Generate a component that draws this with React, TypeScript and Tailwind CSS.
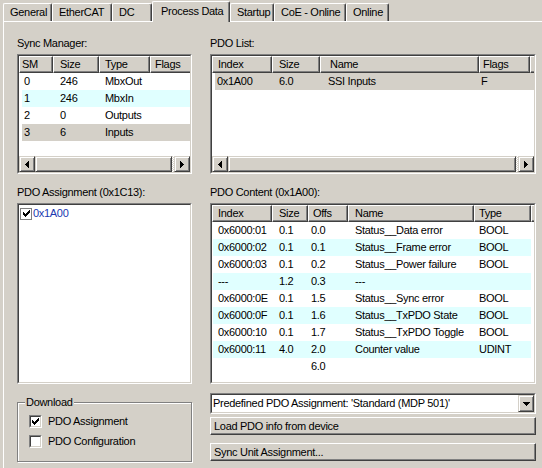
import React from 'react';

type Col = { label: string; h: string; d: string };

function CheckGlyph() {
  return (
    <svg width="7" height="7" viewBox="0 0 7 7" shapeRendering="crispEdges">
      <rect x="6" y="0" width="1" height="1" fill="#000" />
      <rect x="5" y="1" width="2" height="1" fill="#000" />
      <rect x="0" y="2" width="1" height="1" fill="#000" />
      <rect x="4" y="2" width="3" height="1" fill="#000" />
      <rect x="0" y="3" width="2" height="1" fill="#000" />
      <rect x="3" y="3" width="3" height="1" fill="#000" />
      <rect x="0" y="4" width="5" height="1" fill="#000" />
      <rect x="1" y="5" width="3" height="1" fill="#000" />
      <rect x="2" y="6" width="1" height="1" fill="#000" />
    </svg>
  );
}

function Sunken({ className, children }: { className: string; children?: React.ReactNode }) {
  return (
    <div className={`border border-t-[#808080] border-l-[#808080] border-b-white border-r-white ${className}`}>
      <div className="h-full border border-t-[#404040] border-l-[#404040] border-b-[#d4d0c8] border-r-[#d4d0c8] bg-white flex flex-col overflow-hidden">
        {children}
      </div>
    </div>
  );
}

function HeaderCell({ label, cls }: { label: string; cls: string }) {
  return (
    <div
      className={`h-[17px] shrink-0 flex items-center whitespace-nowrap overflow-hidden bg-[#d4d0c8] border-t border-l border-r border-b border-t-white border-l-white border-r-[#404040] border-b-[#404040] shadow-[inset_-1px_-1px_0_#808080] ${cls}`}
    >
      {label}
    </div>
  );
}

function ScrollBtn({ className, children }: { className: string; children?: React.ReactNode }) {
  return (
    <div
      className={`h-[16px] flex items-center justify-center bg-[#d4d0c8] border border-t-[#d4d0c8] border-l-[#d4d0c8] border-b-[#404040] border-r-[#404040] shadow-[inset_1px_1px_0_#ffffff,inset_-1px_-1px_0_#808080] ${className}`}
    >
      {children}
    </div>
  );
}

function HScroll() {
  return (
    <div className="h-[16px] flex shrink-0 bg-[#d4d0c8]">
      <ScrollBtn className="w-[16px] shrink-0">
        <svg width="4" height="7" viewBox="0 0 4 7" shapeRendering="crispEdges">
          <rect x="3" y="0" width="1" height="7" fill="#000" />
          <rect x="2" y="1" width="1" height="5" fill="#000" />
          <rect x="1" y="2" width="1" height="3" fill="#000" />
          <rect x="0" y="3" width="1" height="1" fill="#000" />
        </svg>
      </ScrollBtn>
      <ScrollBtn className="flex-1" />
      <div className="w-[2px] shrink-0 bg-[repeating-conic-gradient(#ffffff_0_25%,#d4d0c8_0_50%)] bg-[length:2px_2px]" />
      <ScrollBtn className="w-[16px] shrink-0">
        <svg width="4" height="7" viewBox="0 0 4 7" shapeRendering="crispEdges">
          <rect x="0" y="0" width="1" height="7" fill="#000" />
          <rect x="1" y="1" width="1" height="5" fill="#000" />
          <rect x="2" y="2" width="1" height="3" fill="#000" />
          <rect x="3" y="3" width="1" height="1" fill="#000" />
        </svg>
      </ScrollBtn>
    </div>
  );
}

const tabs = [
  { label: 'General', cls: 'w-[49px]' },
  { label: 'EtherCAT', cls: 'w-[60px]' },
  { label: 'DC', cls: 'w-[40px]' },
  { label: 'Process Data', cls: 'w-[78px]', active: true },
  { label: 'Startup', cls: 'w-[44px]' },
  { label: 'CoE - Online', cls: 'w-[72px]' },
  { label: 'Online', cls: 'w-[43px]' },
];

const smCols: Col[] = [
  { label: 'SM', h: 'w-[34px] pl-[2px]', d: 'w-[31px] pl-[2px]' },
  { label: 'Size', h: 'w-[46px] pl-[6px]', d: 'w-[46px] pl-[7px]' },
  { label: 'Type', h: 'w-[51px] pl-[5px]', d: 'w-[51px] pl-[6px]' },
  { label: 'Flags', h: 'w-[60px] pl-[4px]', d: 'flex-1 pl-[5px]' },
];
const smRows = [
  { cells: ['0', '246', 'MbxOut', ''], bg: 'bg-white' },
  { cells: ['1', '246', 'MbxIn', ''], bg: 'bg-[#e0ffff]' },
  { cells: ['2', '0', 'Outputs', ''], bg: 'bg-white' },
  { cells: ['3', '6', 'Inputs', ''], bg: 'bg-[#d4d0c8]' },
];

const listCols: Col[] = [
  { label: 'Index', h: 'w-[60px] pl-[5px]', d: 'w-[57px] pl-[2px]' },
  { label: 'Size', h: 'w-[48px] pl-[6px]', d: 'w-[48px] pl-[7px]' },
  { label: 'Name', h: 'w-[159px] pl-[9px]', d: 'w-[159px] pl-[8px]' },
  { label: 'Flags', h: 'w-[51px] pl-[3px]', d: 'flex-1 pl-[2px]' },
  { label: '', h: 'w-[20px]', d: 'hidden' },
];

const contentCols: Col[] = [
  { label: 'Index', h: 'w-[60px] pl-[5px]', d: 'w-[59px] pl-[5px]' },
  { label: 'Size', h: 'w-[36px] pl-[6px]', d: 'w-[36px] pl-[7px]' },
  { label: 'Offs', h: 'w-[40px] pl-[4px]', d: 'w-[40px] pl-[3px]' },
  { label: 'Name', h: 'w-[126px] pl-[6px]', d: 'w-[126px] pl-[7px]' },
  { label: 'Type', h: 'w-[57px] pl-[4px]', d: 'w-[57px] pl-[5px]' },
  { label: '', h: 'w-[20px]', d: 'hidden' },
];
const contentRows = [
  ['0x6000:01', '0.1', '0.0', 'Status__Data error', 'BOOL'],
  ['0x6000:02', '0.1', '0.1', 'Status__Frame error', 'BOOL'],
  ['0x6000:03', '0.1', '0.2', 'Status__Power failure', 'BOOL'],
  ['---', '1.2', '0.3', '---', ''],
  ['0x6000:0E', '0.1', '1.5', 'Status__Sync error', 'BOOL'],
  ['0x6000:0F', '0.1', '1.6', 'Status__TxPDO State', 'BOOL'],
  ['0x6000:10', '0.1', '1.7', 'Status__TxPDO Toggle', 'BOOL'],
  ['0x6000:11', '4.0', '2.0', 'Counter value', 'UDINT'],
  ['', '', '6.0', '', ''],
];

function Header({ cols }: { cols: Col[] }) {
  return (
    <div className="flex shrink-0 overflow-hidden">
      {cols.map((c, i) => (
        <HeaderCell key={i} label={c.label} cls={c.h} />
      ))}
      <div className="flex-1 h-[17px] bg-[#d4d0c8] border-t border-l border-b border-t-white border-l-white border-b-[#404040]" />
    </div>
  );
}

function Row({ cols, cells, bg, rowCls }: { cols: Col[]; cells: string[]; bg: string; rowCls: string }) {
  return (
    <div className={`h-[17px] flex items-center shrink-0 whitespace-nowrap ${bg} ${rowCls}`}>
      {cells.map((t, i) => (
        <div key={i} className={`overflow-hidden ${cols[i].d}`}>
          {t}
        </div>
      ))}
    </div>
  );
}

function DlCheck({ checked }: { checked: boolean }) {
  return (
    <div className="w-[13px] h-[13px] shrink-0 border border-t-[#808080] border-l-[#808080] border-b-white border-r-white">
      <div className="w-full h-full border border-t-[#404040] border-l-[#404040] border-b-[#d4d0c8] border-r-[#d4d0c8] bg-white flex items-center justify-center">
        {checked && <CheckGlyph />}
      </div>
    </div>
  );
}

function Button({ label, className }: { label: string; className: string }) {
  return (
    <div
      className={`h-[18px] flex items-center pl-[3px] bg-[#d4d0c8] border border-t-white border-l-white border-b-[#404040] border-r-[#404040] shadow-[inset_-1px_-1px_0_#808080] ${className}`}
    >
      {label}
    </div>
  );
}

export default function App() {
  return (
    <div className="w-[542px] h-[468px] bg-[#d4d0c8] overflow-hidden font-['Liberation_Sans',Arial,sans-serif] text-[11px] leading-[13px] tracking-[-0.3px] text-black flex flex-col pl-[3px]">
      <div className="h-[21px] flex items-start shrink-0">
        {tabs.map((t) =>
          t.active ? (
            <div
              key={t.label}
              className={`relative z-10 mt-[1px] h-[21px] flex items-start pt-[3px] pl-[8px] shrink-0 whitespace-nowrap bg-[#d4d0c8] border-t border-l border-r border-t-white border-l-white border-r-[#404040] shadow-[inset_-1px_0_0_#808080] rounded-t-[2px] ${t.cls}`}
            >
              {t.label}
            </div>
          ) : (
            <div
              key={t.label}
              className={`mt-[3px] h-[18px] flex items-center pl-[6px] shrink-0 whitespace-nowrap border-t border-l border-r border-t-white border-l-white border-r-[#404040] shadow-[inset_-1px_0_0_#808080] rounded-t-[2px] ${t.cls}`}
            >
              {t.label}
            </div>
          )
        )}
      </div>

      <div className="flex-1 border-t border-l border-t-white border-l-white pl-[13px] pt-[15px]">
        <div className="grid grid-cols-[175px_326px] gap-x-[18px] items-start">
          {/* Row 1 labels */}
          <div className="h-[13px]">Sync Manager:</div>
          <div className="h-[13px]">PDO List:</div>

          {/* Row 1 boxes */}
          <Sunken className="mt-[4px] h-[120px]">
            <Header cols={smCols} />
            {smRows.map((r, i) => (
              <Row key={i} cols={smCols} cells={r.cells} bg={r.bg} rowCls="ml-[3px]" />
            ))}
            <div className="flex-1" />
            <HScroll />
          </Sunken>
          <Sunken className="mt-[4px] h-[120px]">
            <Header cols={listCols} />
            <Row cols={listCols} cells={['0x1A00', '6.0', 'SSI Inputs', 'F']} bg="bg-[#d4d0c8]" rowCls="ml-[3px]" />
            <div className="flex-1" />
            <HScroll />
          </Sunken>

          {/* Row 2 labels */}
          <div className="mt-[12px] h-[13px]">PDO Assignment (0x1C13):</div>
          <div className="mt-[12px] h-[13px]">PDO Content (0x1A00):</div>

          {/* Row 2 boxes */}
          <Sunken className="mt-[4px] h-[181px]">
            <div className="flex items-center gap-[1px] pl-[1px] pt-[2px] h-[15px]">
              <div className="w-[12px] h-[12px] border border-[#808080] bg-white flex items-center justify-center">
                <CheckGlyph />
              </div>
              <span className="text-[#2038b0]">0x1A00</span>
            </div>
          </Sunken>
          <Sunken className="mt-[4px] h-[181px]">
            <Header cols={contentCols} />
            {contentRows.map((r, i) => (
              <Row
                key={i}
                cols={contentCols}
                cells={r}
                bg={i % 2 === 1 ? 'bg-[#e0ffff]' : 'bg-white'}
                rowCls="ml-[1px] w-[318px]"
              />
            ))}
          </Sunken>

          {/* Row 3 */}
          <div className="relative mt-[18px] h-[60px] border border-[#808080] shadow-[inset_1px_1px_0_#ffffff,1px_1px_0_#ffffff] pl-[11px] pt-[12px] flex flex-col gap-[7px]">
            <span className="absolute left-[7px] top-[-7px] px-[1px] bg-[#d4d0c8]">Download</span>
            <div className="flex items-center gap-[6px] h-[13px]">
              <DlCheck checked />
              <span>PDO Assignment</span>
            </div>
            <div className="flex items-center gap-[6px] h-[13px]">
              <DlCheck checked={false} />
              <span>PDO Configuration</span>
            </div>
          </div>
          <div className="mt-[9px] flex flex-col">
            <Sunken className="h-[21px]">
              <div className="h-full flex items-center">
                <span className="flex-1 pl-[1px] whitespace-nowrap">Predefined PDO Assignment: 'Standard (MDP 501)'</span>
                <ScrollBtn className="w-[16px] !h-[17px] shrink-0">
                  <svg width="7" height="4" viewBox="0 0 7 4" shapeRendering="crispEdges">
                    <rect x="0" y="0" width="7" height="1" fill="#000" />
                    <rect x="1" y="1" width="5" height="1" fill="#000" />
                    <rect x="2" y="2" width="3" height="1" fill="#000" />
                    <rect x="3" y="3" width="1" height="1" fill="#000" />
                  </svg>
                </ScrollBtn>
              </div>
            </Sunken>
            <Button label="Load PDO info from device" className="mt-[3px]" />
            <Button label="Sync Unit Assignment..." className="mt-[8px]" />
          </div>
        </div>
      </div>
    </div>
  );
}
